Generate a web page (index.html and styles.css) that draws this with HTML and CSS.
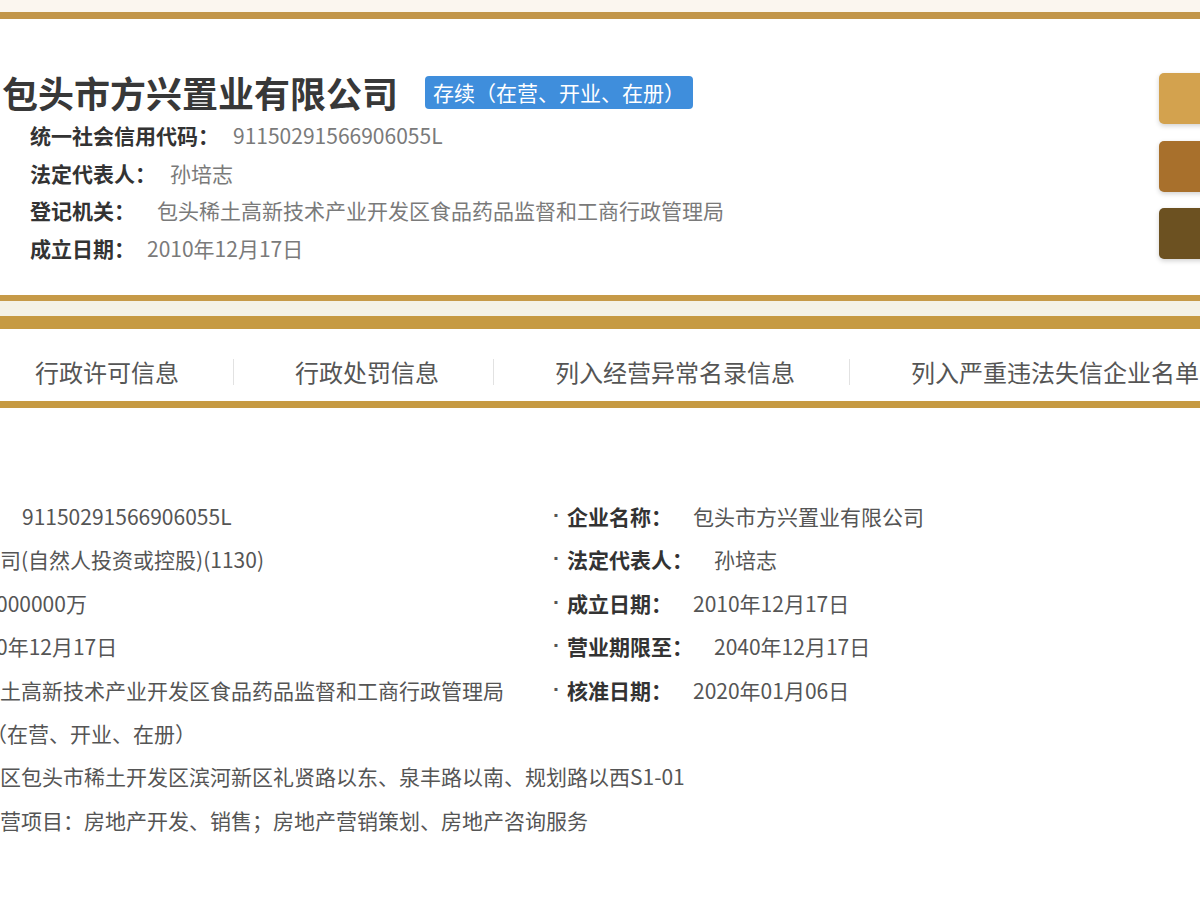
FILE: index.html
```html
<!DOCTYPE html>
<html lang="zh-CN">
<head>
  <meta charset="UTF-8">
  <meta name="viewport" content="width=device-width, initial-scale=1.0">
  <title>包头市方兴置业有限公司</title>
  <link rel="stylesheet" href="styles.css">
</head>
<body>
  <div class="topbar"></div>

  <div class="head">
    <div class="head-main">
      <div class="title-row">
        <h1>包头市方兴置业有限公司</h1>
        <span class="badge">存续（在营、开业、在册）</span>
      </div>
      <ul class="info">
        <li><b>统一社会信用代码：</b><span class="v">91150291566906055L</span></li>
        <li><b>法定代表人：</b><span class="v">孙培志</span></li>
        <li><b>登记机关：</b><span class="v v-wide">包头稀土高新技术产业开发区食品药品监督和工商行政管理局</span></li>
        <li><b>成立日期：</b><span class="v v-tight">2010年12月17日</span></li>
      </ul>
    </div>
    <div class="actions">
      <span class="act act-gold"></span>
      <span class="act act-brown"></span>
      <span class="act act-dark"></span>
    </div>
  </div>

  <div class="divider"></div>

  <div class="tabs">
    <span class="tab">行政许可信息</span>
    <span class="tab">行政处罚信息</span>
    <span class="tab">列入经营异常名录信息</span>
    <span class="tab">列入严重违法失信企业名单</span>
  </div>

  <div class="detail">
    <div class="cell first">91150291566906055L</div>
    <div class="cell item"><b>企业名称：</b><span class="v">包头市方兴置业有限公司</span></div>

    <div class="cell">司(自然人投资或控股)(1130)</div>
    <div class="cell item"><b>法定代表人：</b><span class="v">孙培志</span></div>

    <div class="cell cut">000000万</div>
    <div class="cell item"><b>成立日期：</b><span class="v">2010年12月17日</span></div>

    <div class="cell cut">0年12月17日</div>
    <div class="cell item"><b>营业期限至：</b><span class="v">2040年12月17日</span></div>

    <div class="cell">土高新技术产业开发区食品药品监督和工商行政管理局</div>
    <div class="cell item"><b>核准日期：</b><span class="v">2020年01月06日</span></div>

    <div class="cell full paren">（在营、开业、在册）</div>
    <div class="cell full">区包头市稀土开发区滨河新区礼贤路以东、泉丰路以南、规划路以西S1-01</div>
    <div class="cell full">营项目：房地产开发、销售；房地产营销策划、房地产咨询服务</div>
  </div>
</body>
</html>
```

FILE: styles.css
```css
body {
  margin: 0;
  overflow: hidden;
  background: #fff;
  font-family: "Noto Sans CJK SC", "Noto Sans", sans-serif;
  color: #333;
}

.topbar {
  height: 12px;
  background: #fbf6ef;
  border-bottom: 7px solid #c2964a;
}

/* header card */
.head {
  display: flex;
  justify-content: space-between;
  padding: 51px 0 28px 0;
  overflow: hidden;
}
.title-row {
  display: flex;
  align-items: center;
  height: 44px;
}
.title-row h1 {
  margin: 0 0 0 2px;
  font-size: 36px;
  line-height: 44px;
  font-weight: bold;
  color: #383838;
}
.badge {
  margin-left: 27px;
  height: 33px;
  line-height: 33px;
  padding: 0 8px;
  font-size: 21px;
  color: #fff;
  background: #3f8edc;
  border-radius: 4px;
}
.info {
  list-style: none;
  margin: 3px 0 0;
  padding-left: 30px;
}
.info li {
  font-size: 21px;
  line-height: 37.5px;
  white-space: nowrap;
}
.info b {
  color: #333;
}
.info .v {
  margin-left: 14px;
  color: #7a7a7a;
}
.info .v-wide {
  margin-left: 22px;
}
.info .v-tight {
  margin-left: 12px;
}

.actions {
  display: flex;
  flex-direction: column;
  gap: 16.5px;
  margin-top: 3px;
  margin-right: -79px;
}
.act {
  width: 120px;
  height: 51px;
  border-radius: 5px;
  box-shadow: 0 2px 5px rgba(0, 0, 0, 0.18);
}
.act-gold { background: #d3a24e; }
.act-brown { background: #a8702c; }
.act-dark { background: #6c5121; }

.divider {
  border-top: 6px solid #c69a48;
  height: 15px;
  background: #f4f2e6;
  border-bottom: 13px solid #c69a42;
}

/* tabs */
.tabs {
  display: flex;
  align-items: center;
  height: 79px;
  padding-top: 14px;
  box-sizing: border-box;
  margin-left: -26px;
  border-bottom: 7px solid #c69a42;
  white-space: nowrap;
}
.tab {
  flex-shrink: 0;
  padding: 0 54px 0 61px;
  font-size: 24px;
  line-height: 26px;
  color: #555;
}
.tab + .tab {
  border-left: 1px solid #e2e2e2;
}

/* detail list */
.detail {
  display: grid;
  grid-template-columns: 553px 1fr;
  grid-auto-rows: 43.4px;
  padding-top: 87px;
  font-size: 21px;
  line-height: 43.4px;
  color: #555;
  white-space: nowrap;
}
.cell.first {
  padding-left: 22px;
}
.cell.cut {
  margin-left: -4px;
}
.cell.paren {
  margin-left: -14px;
}
.cell.full {
  grid-column: 1 / -1;
}
.item::before {
  content: "·";
  display: inline-block;
  width: 14px;
  line-height: 1;
  font-family: "Liberation Sans", sans-serif;
  font-weight: bold;
  color: #555;
  vertical-align: 3px;
}
.item b {
  color: #333;
}
.item .v {
  margin-left: 21px;
}
```
